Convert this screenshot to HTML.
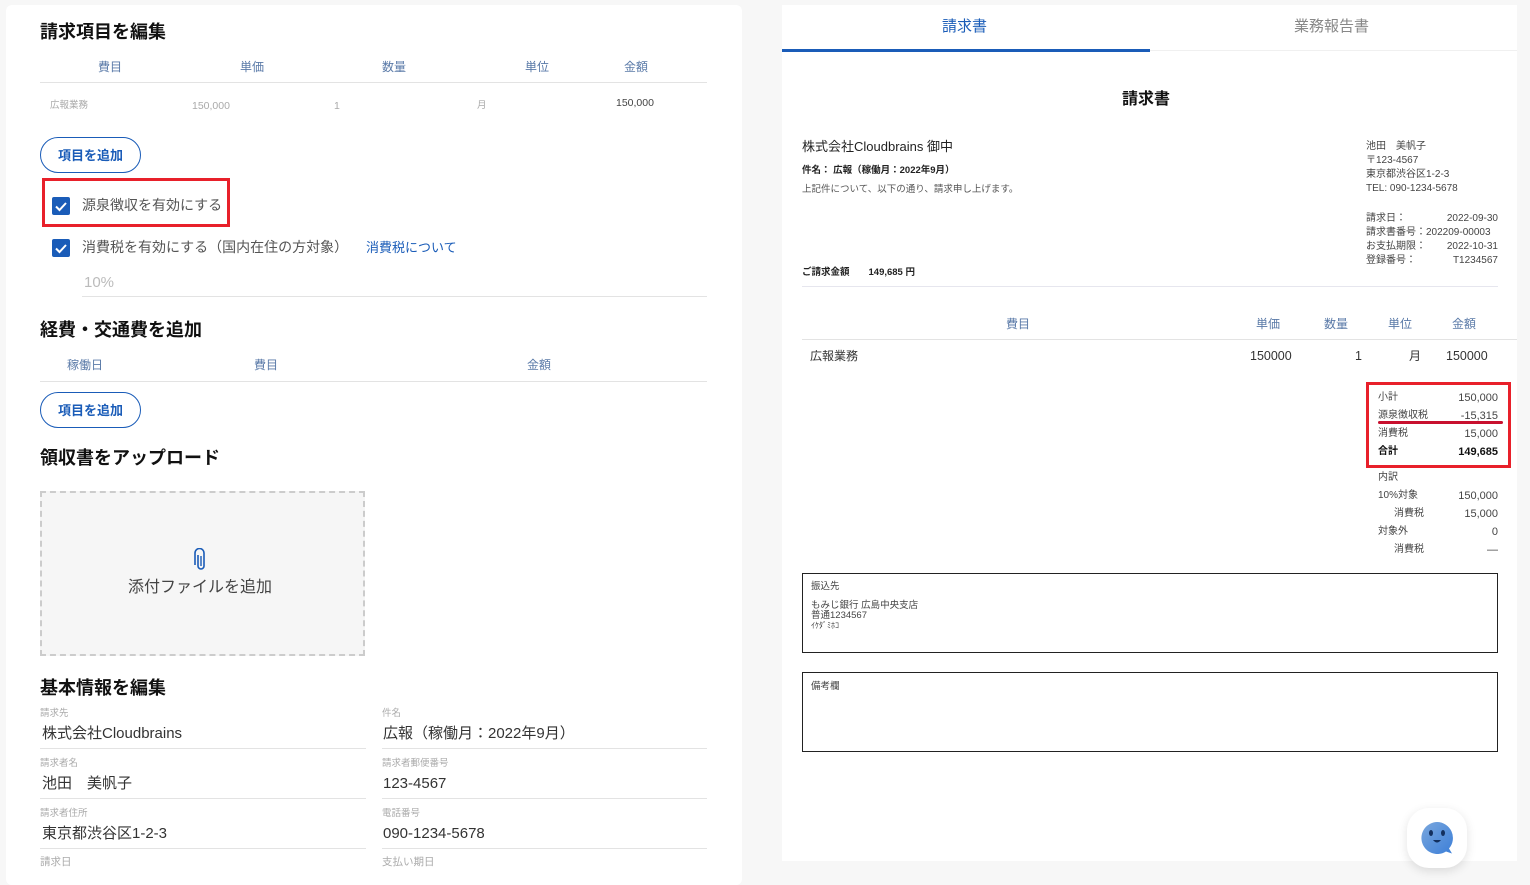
<!DOCTYPE html>
<html><head><meta charset="utf-8">
<style>
*{margin:0;padding:0;box-sizing:border-box}
body{width:1530px;height:878px;background:#f7f7f7;position:relative;overflow:hidden;font-family:"Liberation Sans","Noto Sans CJK JP",sans-serif;color:#333}
.t{position:absolute;white-space:nowrap;line-height:1}
.card{position:absolute;background:#fff}
.hl{position:absolute;height:1px;background:#e3e3e3}
.h{font-weight:bold;font-size:18px;color:#111}
.th{font-size:12px;color:#5a7aa8}
.btn{position:absolute;border:1px solid #1a5cb8;border-radius:18px;color:#1a5cb8;font-size:13px;font-weight:bold;text-align:center;line-height:35px;background:#fff}
.cb{position:absolute;width:18px;height:18px;background:#1a5cb8;border-radius:2px}
.lbl{font-size:9.5px;color:#aaa}
.val{font-size:15px;color:#333}
.s{font-size:10px;color:#444}
.r{text-align:right}
</style></head><body>

<div class="card" style="left:6px;top:5px;width:736px;height:880px;border-radius:6px"></div>
<div class="t h" style="left:40px;top:23px">請求項目を編集</div>
<div class="t th" style="left:98px;top:61px">費目</div>
<div class="t th" style="left:240px;top:61px">単価</div>
<div class="t th" style="left:382px;top:61px">数量</div>
<div class="t th" style="left:525px;top:61px">単位</div>
<div class="t th" style="left:624px;top:61px">金額</div>
<div class="hl" style="left:40px;top:82px;width:667px"></div>
<div class="t" style="left:50px;top:101px;font-size:9.5px;color:#aaa">広報業務</div>
<div class="t" style="left:192px;top:101px;font-size:10.5px;color:#aaa">150,000</div>
<div class="t" style="left:334px;top:101px;font-size:10.5px;color:#aaa">1</div>
<div class="t" style="left:477px;top:101px;font-size:9.5px;color:#aaa">月</div>
<div class="t" style="left:616px;top:98px;font-size:10.5px;color:#444">150,000</div>
<div class="btn" style="left:40px;top:137px;width:101px;height:36px">項目を追加</div>

<div style="position:absolute;left:42px;top:178px;width:188px;height:49px;border:3px solid #e8202a"></div>
<div class="cb" style="left:52px;top:197px"><svg width="18" height="18"><path d="M4 9.5l3.5 3.5 6.5-7" stroke="#fff" stroke-width="2" fill="none"/></svg></div>
<div class="t" style="left:82px;top:198px;font-size:14px;color:#555">源泉徴収を有効にする</div>
<div class="cb" style="left:52px;top:239px"><svg width="18" height="18"><path d="M4 9.5l3.5 3.5 6.5-7" stroke="#fff" stroke-width="2" fill="none"/></svg></div>
<div class="t" style="left:82px;top:240px;font-size:14px;color:#555">消費税を有効にする（国内在住の方対象）</div>
<div class="t" style="left:366px;top:241px;font-size:13px;color:#1a5cb8">消費税について</div>
<div class="t" style="left:84px;top:275px;font-size:15px;color:#bbb">10%</div>
<div class="hl" style="left:82px;top:296px;width:625px"></div>

<div class="t h" style="left:40px;top:321px">経費・交通費を追加</div>
<div class="t th" style="left:67px;top:359px">稼働日</div>
<div class="t th" style="left:254px;top:359px">費目</div>
<div class="t th" style="left:527px;top:359px">金額</div>
<div class="hl" style="left:40px;top:381px;width:667px"></div>
<div class="btn" style="left:40px;top:392px;width:101px;height:36px">項目を追加</div>

<div class="t h" style="left:40px;top:449px">領収書をアップロード</div>
<div style="position:absolute;left:40px;top:491px;width:325px;height:165px;border:2px dashed #ccc;background:#f6f6f6"></div>
<svg style="position:absolute;left:194px;top:548px" width="14" height="24" viewBox="0 0 14 24"><path d="M4 7v11a3 3 0 0 0 6 0V5a4.5 4.5 0 0 0-9 0v12" stroke="#1a5cb8" stroke-width="1.6" fill="none"/><path d="M7 8v10" stroke="#1a5cb8" stroke-width="1.4"/></svg>
<div class="t" style="left:128px;top:580px;font-size:16px;color:#444">添付ファイルを追加</div>

<div class="t h" style="left:40px;top:679px">基本情報を編集</div>
<div class="t lbl" style="left:40px;top:709px">請求先</div>
<div class="t val" style="left:42px;top:726px">株式会社Cloudbrains</div>
<div class="hl" style="left:40px;top:748px;width:326px"></div>
<div class="t lbl" style="left:382px;top:709px">件名</div>
<div class="t val" style="left:383px;top:726px">広報（稼働月：2022年9月）</div>
<div class="hl" style="left:382px;top:748px;width:325px"></div>
<div class="t lbl" style="left:40px;top:759px">請求者名</div>
<div class="t val" style="left:42px;top:776px">池田　美帆子</div>
<div class="hl" style="left:40px;top:798px;width:326px"></div>
<div class="t lbl" style="left:382px;top:759px">請求者郵便番号</div>
<div class="t val" style="left:383px;top:776px">123-4567</div>
<div class="hl" style="left:382px;top:798px;width:325px"></div>
<div class="t lbl" style="left:40px;top:809px">請求者住所</div>
<div class="t val" style="left:42px;top:826px">東京都渋谷区1-2-3</div>
<div class="hl" style="left:40px;top:848px;width:326px"></div>
<div class="t lbl" style="left:382px;top:809px">電話番号</div>
<div class="t val" style="left:383px;top:826px">090-1234-5678</div>
<div class="hl" style="left:382px;top:848px;width:325px"></div>
<div class="t" style="left:40px;top:857px;font-size:10.5px;color:#aaa">請求日</div>
<div class="t" style="left:382px;top:857px;font-size:10.5px;color:#aaa">支払い期日</div>

<!-- right -->
<div class="card" style="left:782px;top:5px;width:735px;height:856px"></div>
<div class="t" style="left:942px;top:19px;font-size:15px;color:#1a5cb8">請求書</div>
<div class="t" style="left:1294px;top:19px;font-size:15px;color:#888">業務報告書</div>
<div style="position:absolute;left:1150px;top:50px;width:367px;height:1px;background:#f0f0f0"></div>
<div style="position:absolute;left:782px;top:49px;width:368px;height:3px;background:#1a5cb8"></div>

<div class="t" style="left:1122px;top:92px;font-size:16px;font-weight:bold;color:#111">請求書</div>
<div class="t" style="left:802px;top:140px;font-size:13px;color:#222">株式会社Cloudbrains 御中</div>
<div class="t" style="left:802px;top:166px;font-size:9.5px;font-weight:bold;color:#222">件名： 広報（稼働月：2022年9月）</div>
<div class="t" style="left:802px;top:185px;font-size:9.5px;color:#555">上記件について、以下の通り、請求申し上げます。</div>
<div class="t s" style="left:1366px;top:142px">池田　美帆子</div>
<div class="t s" style="left:1366px;top:156px">〒123-4567</div>
<div class="t s" style="left:1366px;top:170px">東京都渋谷区1-2-3</div>
<div class="t s" style="left:1366px;top:184px">TEL: 090-1234-5678</div>
<div class="t s" style="left:1366px;top:214px">請求日：</div><div class="t s r" style="left:1400px;width:98px;top:214px">2022-09-30</div>
<div class="t s" style="left:1366px;top:228px">請求書番号：202209-00003</div>
<div class="t s" style="left:1366px;top:242px">お支払期限：</div><div class="t s r" style="left:1400px;width:98px;top:242px">2022-10-31</div>
<div class="t s" style="left:1366px;top:256px">登録番号：</div><div class="t s r" style="left:1400px;width:98px;top:256px">T1234567</div>
<div class="t" style="left:802px;top:268px;font-size:9.5px;font-weight:bold;color:#222">ご請求金額　　149,685 円</div>
<div class="hl" style="left:802px;top:286px;width:696px;background:#e6e6ee"></div>

<div class="t th" style="left:1006px;top:318px">費目</div>
<div class="t th" style="left:1256px;top:318px">単価</div>
<div class="t th" style="left:1324px;top:318px">数量</div>
<div class="t th" style="left:1388px;top:318px">単位</div>
<div class="t th" style="left:1452px;top:318px">金額</div>
<div class="hl" style="left:802px;top:339px;width:715px"></div>
<div class="t" style="left:810px;top:350px;font-size:12px;color:#333">広報業務</div>
<div class="t" style="left:1250px;top:350px;font-size:12.5px;color:#333">150000</div>
<div class="t" style="left:1355px;top:350px;font-size:12.5px;color:#333">1</div>
<div class="t" style="left:1409px;top:350px;font-size:12px;color:#333">月</div>
<div class="t" style="left:1446px;top:350px;font-size:12.5px;color:#333">150000</div>

<div style="position:absolute;left:1366px;top:382px;width:145px;height:86px;border:3px solid #e8202a"></div>
<div style="position:absolute;left:1378px;top:421px;width:125px;height:3px;background:#c8102e;border-radius:2px"></div>
<div class="t s" style="left:1378px;top:393px">小計</div><div class="t s r" style="left:1400px;width:98px;top:393px;font-size:11px">150,000</div>
<div class="t s" style="left:1378px;top:411px">源泉徴収税</div><div class="t s r" style="left:1400px;width:98px;top:411px;font-size:11px">-15,315</div>
<div class="t s" style="left:1378px;top:429px">消費税</div><div class="t s r" style="left:1400px;width:98px;top:429px;font-size:11px">15,000</div>
<div class="t s" style="left:1378px;top:447px;font-weight:bold;color:#111">合計</div><div class="t s r" style="left:1400px;width:98px;top:447px;font-size:11px;font-weight:bold;color:#111">149,685</div>
<div class="t s" style="left:1378px;top:473px">内訳</div>
<div class="t s" style="left:1378px;top:491px">10%対象</div><div class="t s r" style="left:1400px;width:98px;top:491px;font-size:11px">150,000</div>
<div class="t s" style="left:1394px;top:509px">消費税</div><div class="t s r" style="left:1400px;width:98px;top:509px;font-size:11px">15,000</div>
<div class="t s" style="left:1378px;top:527px">対象外</div><div class="t s r" style="left:1400px;width:98px;top:527px;font-size:11px">0</div>
<div class="t s" style="left:1394px;top:545px">消費税</div><div class="t s r" style="left:1400px;width:98px;top:545px;font-size:11px">—</div>

<div style="position:absolute;left:802px;top:573px;width:696px;height:80px;border:1px solid #222"></div>
<div class="t" style="left:811px;top:582px;font-size:9.5px;color:#444">振込先</div>
<div class="t" style="left:811px;top:601px;font-size:9.5px;color:#444;line-height:10px">もみじ銀行 広島中央支店<br>普通1234567<br><span style="font-size:8px">ｲｹﾀﾞﾐﾎｺ</span></div>
<div style="position:absolute;left:802px;top:672px;width:696px;height:80px;border:1px solid #222"></div>
<div class="t" style="left:811px;top:682px;font-size:9.5px;color:#444">備考欄</div>

<div style="position:absolute;left:1407px;top:808px;width:60px;height:60px;border-radius:22px;background:#fff;box-shadow:0 3px 10px rgba(0,0,0,.12)"></div>
<svg style="position:absolute;left:1418px;top:819px" width="40" height="40" viewBox="0 0 40 40"><defs><linearGradient id="g" x1="0" y1="0" x2="1" y2="1"><stop offset="0" stop-color="#7aa7dd"/><stop offset="1" stop-color="#3c7fd8"/></linearGradient></defs><path d="M19 3a16 16 0 1 0 9 29.5l6 2-3-5A16 16 0 0 0 19 3z" fill="url(#g)"/><ellipse cx="13" cy="14" rx="2" ry="3" fill="#13305e"/><ellipse cx="25" cy="14" rx="2" ry="3" fill="#13305e"/><path d="M15 21q4 5 8 0z" fill="#13305e"/></svg>
</body></html>
